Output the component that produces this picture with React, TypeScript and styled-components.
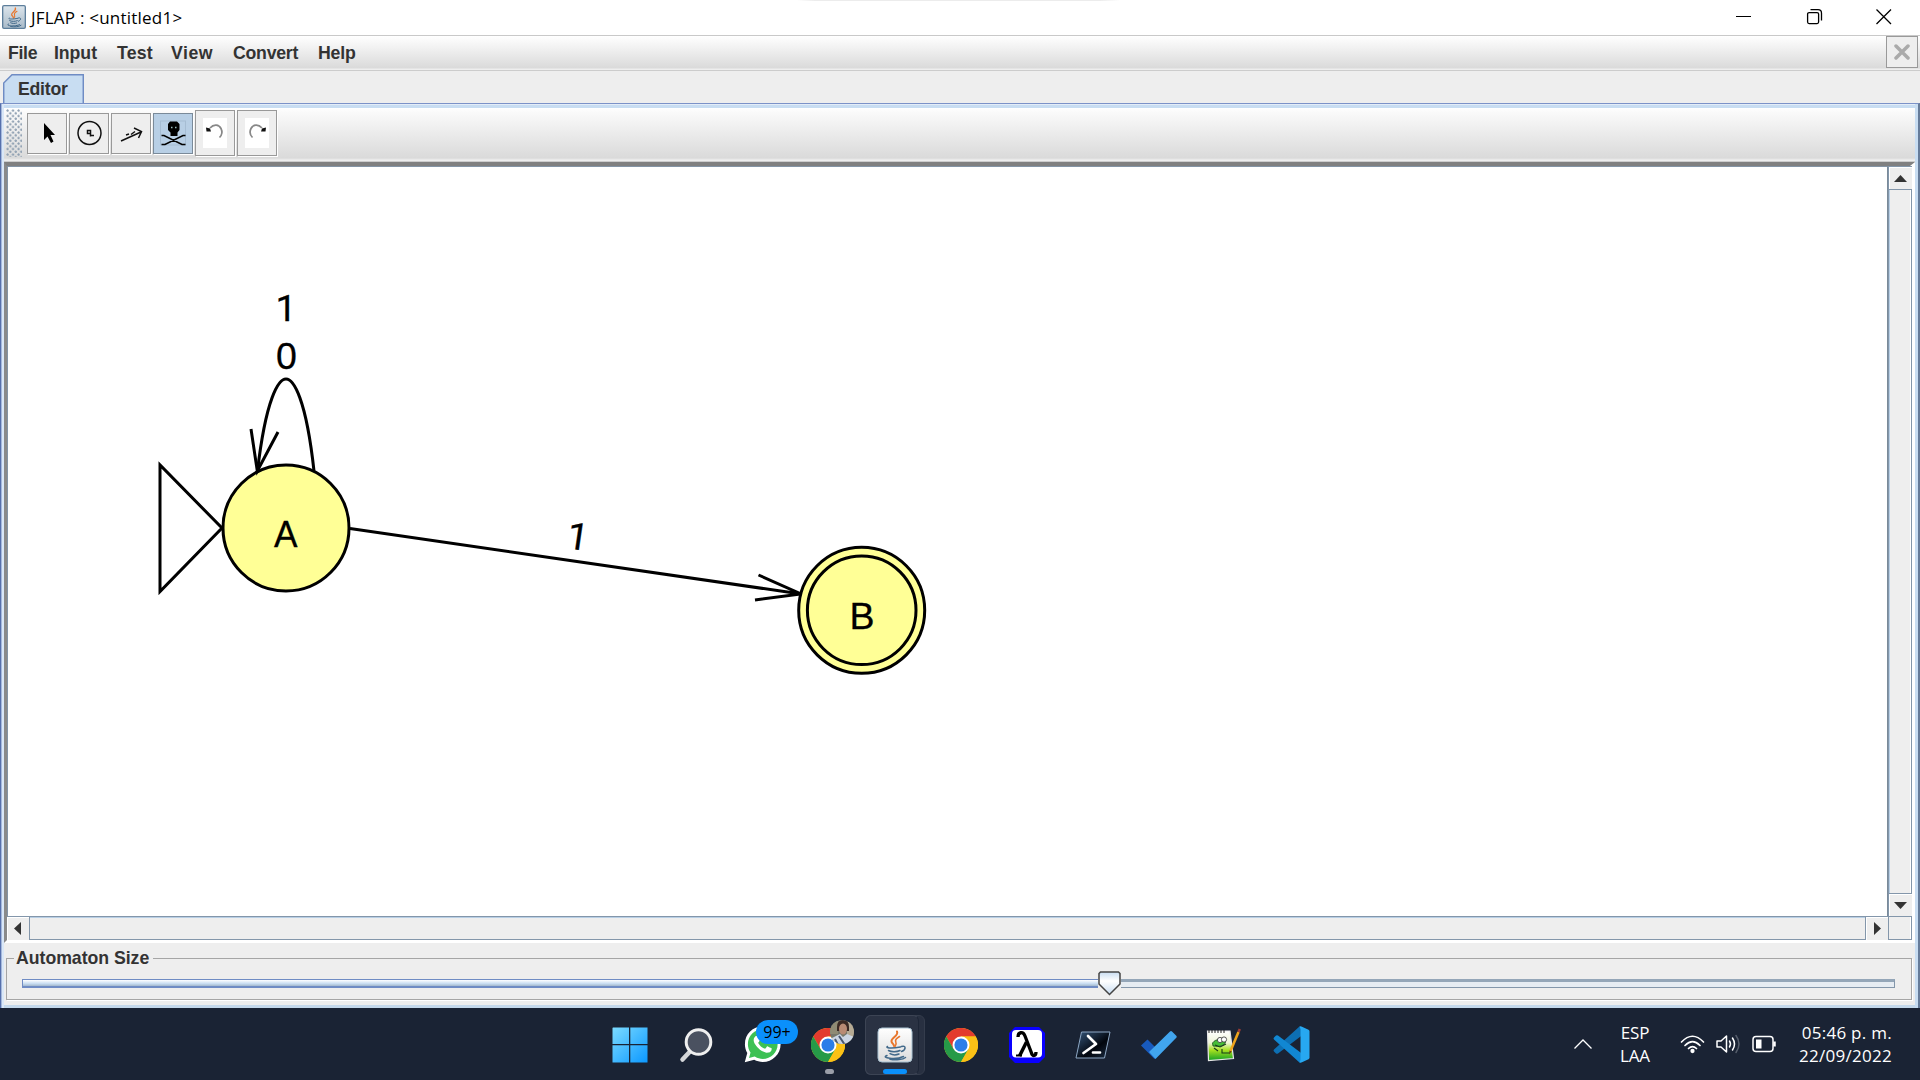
import React from 'react';
import styled, { createGlobalStyle, css } from 'styled-components';
import { FaWhatsapp } from 'react-icons/fa6';

const Global = createGlobalStyle`
  html, body { margin: 0; padding: 0; overflow: hidden; background: #eee; }
  * { box-sizing: border-box; }
  svg { display: block; flex: none; }
`;

const ui = `'Open Sans', 'Noto Sans', sans-serif`;
const swing = `'Liberation Sans', Arial, sans-serif`;

const Screen = styled.div`
  width: 1920px;
  height: 1080px;
  display: flex;
  flex-direction: column;
  background: #eee;
`;

const TitleBar = styled.header`
  height: 35px;
  flex: none;
  display: flex;
  background: linear-gradient(90deg, transparent 797px, #ececec 815px, #ececec 1100px, transparent 1120px) top / 100% 1px no-repeat, #fff;
`;
const AppIcon = styled.div`
  padding: 5px 0 0 2px;
`;
const Title = styled.h1`
  margin: 6px 0 0 5px;
  flex: 1;
  font: 400 17px/24px ${ui};
  letter-spacing: 0.22px;
  color: #000;
`;
const WindowButtons = styled.div`
  display: flex;
  padding: 8px 28px 0 0;
  gap: 52px;
`;

const MenuBar = styled.nav`
  height: 36px;
  flex: none;
  display: flex;
  align-items: flex-start;
  border-top: 1px solid #c9c9c9;
  border-bottom: 1px solid #ccc;
  padding-left: 8px;
  background: linear-gradient(#fff, #dadada 32px, #eee 33px);
`;
const MenuItem = styled.span<{ $w: number; $ls?: number }>`
  width: ${p => p.$w}px;
  padding-top: 6px;
  font: 700 17.7px/22px ${swing};
  letter-spacing: ${p => p.$ls ?? -0.3}px;
  color: #333;
`;
const DismissButton = styled.button`
  width: 32px;
  height: 32px;
  padding: 0;
  margin: 0 2px 0 auto;
  border: 1.5px solid #999;
  background: #eee;
  display: grid;
  place-items: center;
`;

const TabStrip = styled.div`
  height: 32px;
  flex: none;
  padding: 3px 0 0 3px;
  background: #eee;
`;
const Tab = styled.div`
  width: 81px;
  height: 30px;
  display: grid;
  svg, span { grid-area: 1 / 1; }
`;
const TabLabel = styled.span`
  padding: 4px 0 0 15px;
  font: 700 17.7px/22px ${swing};
  letter-spacing: -0.25px;
  color: #333;
`;

const Pane = styled.main`
  height: 905px;
  flex: none;
  display: flex;
  flex-direction: column;
  border-left: 1px solid #5670ac;
  border-right: 2px solid #667b99;
  border-top: 1px solid #7b92c8;
  box-shadow: inset 1px 0 #a5b8dc, inset 3px 0 #d9e7f7, inset -3px 0 #c8ddf2, inset 0 1px #e4edf8, inset 0 4px #c8ddf2, inset 0 -3px #c5d9ec;
  padding: 4px 3px 3px 3px;
`;
const Toolbar = styled.div`
  height: 54px;
  flex: none;
  display: flex;
  align-items: center;
  gap: 2px;
  padding: 0 0 3px 2px;
  border-bottom: 1px solid #ccc;
  background: linear-gradient(#fff, #fafafa 4px, #dadada 50px, #eee 52px);
`;
const Grip = styled.div`
  width: 16px;
  height: 48px;
  margin-right: 3px;
  background:
    radial-gradient(circle at 1.5px 1.5px, #8fa0b2 0.9px, transparent 1.4px) 0 0 / 5.5px 5.5px,
    radial-gradient(circle at 1.5px 1.5px, #8fa0b2 0.9px, transparent 1.4px) 2.75px 2.75px / 5.5px 5.5px;
`;
const ToolButton = styled.button<{ $active?: boolean; $tall?: boolean }>`
  width: 40px;
  height: ${p => (p.$tall ? 46 : 41)}px;
  padding: 0;
  border: 1.5px solid #999;
  box-shadow: 1px 1px #fff;
  background: #eee;
  display: grid;
  place-items: center;
  ${p => p.$active && css`
    background: #b8cfe5;
    border-color: #7a8a99;
  `}
`;

const ScrollPane = styled.section`
  height: 781px;
  flex: none;
  display: grid;
  grid-template: 750px 24px / 1881px 24px;
  border: solid;
  border-width: 4px 5px 3px 3px;
  border-color: #808080 #fff #fff #8a8a8a;
  background: #eee;
`;
const Canvas = styled.div`
  background: #fff;
  border-top: 1px solid #8494a5;
  border-left: 1px solid #8494a5;
  border-right: 1px solid #7a8a99;
`;
const barEdge = '#8396aa';
const VBar = styled.div`
  display: flex;
  flex-direction: column;
  justify-content: space-between;
  border: solid ${barEdge};
  border-width: 1px 1px 0 1px;
  box-shadow: inset 1px 0 #b8cfe5;
`;
const HBar = styled.div`
  display: flex;
  justify-content: space-between;
  border: solid ${barEdge};
  border-width: 1px 0 1px 0;
  box-shadow: inset 0 1px #b8cfe5;
`;
const Arrow = styled.div<{ $edge: 'top' | 'bottom' | 'left' | 'right' }>`
  width: 23px;
  height: 23px;
  display: grid;
  place-items: center;
  background: #eee;
  box-shadow: inset 1px 1px #fff;
  padding-right: ${p => (p.$edge === 'right' ? 2 : 0)}px;
  border-${p => p.$edge}: 1.5px solid ${barEdge};
`;
const Corner = styled.div`
  border: 1px solid ${barEdge};
`;

const SizePanel = styled.section`
  flex: 1;
  padding: 4px 3px 1px 2px;
  background: #eee;
`;
const SizeBox = styled.fieldset`
  height: 53px;
  margin: 0;
  padding: 1px 16px 0 15px;
  border: 1px solid #a5a5a5;
  box-shadow: 1px 1px #fff;
  min-width: 0;
`;
const SizeLegend = styled.legend`
  margin-left: -8px;
  padding: 0 4px 0 2px;
  font: 700 17.7px/22px ${swing};
  letter-spacing: -0.03px;
  color: #333;
`;
const Slider = styled.div`
  height: 26px;
  display: flex;
  align-items: center;
  justify-content: flex-start;
`;
const TrackFilled = styled.div`
  width: 1076px;
  height: 9px;
  border: 1px solid #6f8cc4;
  border-right: 0;
  border-bottom-width: 2px;
  background: linear-gradient(#fff, #c8ddf2 60%, #a3b8cc);
`;
const TrackEmpty = styled.div`
  flex: 1;
  height: 9px;
  border: 1.5px solid #8396aa;
  border-top: 3px solid #94a6b8;
  border-left: 0;
  background: #e6ecf2;
`;

const Taskbar = styled.footer`
  height: 72px;
  flex: none;
  display: flex;
  background: #1a2334;
  color: #fff;
`;
const Apps = styled.div`
  display: flex;
  padding-left: 597px;
`;
const AppCell = styled.div<{ $nudge?: number }>`
  position: relative;
  width: 66px;
  height: 72px;
  display: grid;
  place-items: center;
  padding: 1px 0 0 ${p => p.$nudge ?? 0}px;
`;
const Badge = styled.span`
  position: absolute;
  left: 27px;
  top: 12px;
  width: 42px;
  height: 24px;
  border-radius: 12px;
  background: #0a90fb;
  color: #000;
  font: 400 16px/24px ${ui};
  text-align: center;
`;
const Avatar = styled.div`
  position: absolute;
  left: 34px;
  top: 11px;
`;
const Dot = styled.i`
  position: absolute;
  left: 30px;
  bottom: 6px;
  width: 9px;
  height: 5px;
  border-radius: 3px;
  background: #9a9ea8;
`;
const ActiveFrame = styled.div`
  position: relative;
  width: 60px;
  height: 60px;
  border-radius: 6px;
  background: #283041;
  border: 1px solid #343c4c;
`;
const FrontFrame = styled.div`
  position: absolute;
  left: -1px;
  top: -1px;
  width: 54px;
  height: 60px;
  border-radius: 6px;
  background: #2a3243;
  border: 1px solid #3c4454;
  border-right-color: #1d2637;
  display: grid;
  place-items: center;
  padding-left: 6px;
`;
const Underline = styled.i`
  position: absolute;
  left: 22px;
  bottom: 6px;
  width: 24px;
  height: 5px;
  border-radius: 3px;
  background: #0a90fb;
`;
const Tray = styled.div`
  margin-left: auto;
  display: flex;
  align-items: center;
  padding-right: 28px;
`;
const TrayIcons = styled.div`
  display: flex;
  gap: 11px;
  margin: 0 0 0 25px;
`;
const TrayText = styled.div<{ $align: string; $w: number; $ls?: number }>`
  width: ${p => p.$w}px;
  text-align: ${p => p.$align};
  font: 400 17px/23px ${ui};
  letter-spacing: ${p => p.$ls ?? 0}px;
  white-space: nowrap;
  padding-bottom: 1px;
`;
const Language = styled(TrayText)`
  margin-left: 22px;
`;

const JavaIcon = ({ size, dark }: { size: number; dark?: boolean }) => (
  <svg width={size} height={size} viewBox="0 0 36 36">
    <defs>
      <linearGradient id={dark ? 'jt' : 'jw'} x1="0" y1="0" x2="0" y2="1">
        <stop offset="0" stopColor={dark ? '#dce5ec' : '#ffffff'} />
        <stop offset="1" stopColor={dark ? '#a9bac8' : '#dcdcdc'} />
      </linearGradient>
    </defs>
    <rect x="1" y="1" width="34" height="34" rx={dark ? 2 : 4} fill={`url(#${dark ? 'jt' : 'jw'})`} stroke={dark ? '#5e7f9c' : '#a9c2d2'} strokeWidth={dark ? 2 : 1} />
    <g fill="none" strokeLinecap="round">
      <path d="M20 4.5C22 9 14 10.5 14.5 14.500C14.800 16.500 17 17 17 19" stroke="#e8762c" strokeWidth="2" />
      <path d="M22.500 9.500C19 11.500 17.800 13 18.800 15C19.800 17 19.200 18 18 19.500" stroke="#e8762c" strokeWidth="1.600" />
      <path d="M10.500 19.500C8 21 14 21.800 23.500 20M11.500 23.500C14 25 20 25 23 23.500M13 26.700C15.500 28 19.500 28 22 27M24.500 19.500C29 18 29.500 22.500 24.500 24.500M10 28.500C3 31 19 33 26.500 29.500M13 32.300C19 33.400 26 32.500 28.500 30.500" stroke="#42698a" strokeWidth="1.500" />
    </g>
  </svg>
);

const Chrome = () => (
  <svg width="34" height="34" viewBox="0 0 48 48">
    <circle cx="24" cy="24" r="24" fill="#fbc116" />
    <path d="M24 12H44.800A24 24 0 0 0 3.200 12L13.600 30Z" fill="#e33b2e" />
    <path d="M3.200 12A24 24 0 0 0 24 48L34.400 30L24 24L13.600 30Z" fill="#269a48" />
    <path d="M24 12H44.800A24 24 0 0 1 24 48L34.400 30Z" fill="#fbc116" />
    <circle cx="24" cy="24" r="12" fill="#fff" />
    <circle cx="24" cy="24" r="9.300" fill="#2b7de9" />
  </svg>
);

const WindowsLogo = () => (
  <svg width="36" height="36" viewBox="0 0 36 36">
    <defs>
      <linearGradient id="win" gradientUnits="userSpaceOnUse" x1="0" y1="0" x2="36" y2="36">
        <stop offset="0" stopColor="#7ddcff" />
        <stop offset="1" stopColor="#0a97ff" />
      </linearGradient>
    </defs>
    <path d="M1 .5H17V17H.500V1ZM18.300 .5H35.500V17H18.300ZM.500 18.300H17V35.500H.500ZM18.300 18.300H35.500V35.500H18.300Z" fill="url(#win)" />
  </svg>
);

const SearchIcon = () => (
  <svg width="34" height="36" viewBox="0 0 34 36">
    <path d="M3.500 32.500L11.500 24" stroke="#d4d6d9" strokeWidth="4.500" strokeLinecap="round" />
    <circle cx="19.500" cy="15" r="12.300" fill="#4a5160" stroke="#efefef" strokeWidth="3" />
  </svg>
);

const WhatsApp = () => (
  <svg width="37" height="37" viewBox="0 0 37 37">
    <circle cx="18.800" cy="18" r="15.500" fill="#3dc154" />
    <path d="M3 34L6 24L13 31Z" fill="#3dc154" />
    <FaWhatsapp x="-1.800" y="-2.200" size={41} color="#fff" />
  </svg>
);

const LambdaIcon = () => (
  <svg width="36" height="36" viewBox="0 0 36 36">
    <path d="M6 0H30L36 6V30L30 36H6L0 30V6Z" fill="#0a00ff" />
    <rect x="3" y="3" width="30" height="27.500" rx="4" fill="#fff" />
    <path d="M9 10C9 5 14 4 16 9L22.500 26C23.500 30 27 29 27 25" fill="none" stroke="#000" strokeWidth="3.300" />
    <path d="M17.500 15L10.500 29" stroke="#000" strokeWidth="3.500" />
    <path d="M7 28.500H13" stroke="#000" strokeWidth="2" />
  </svg>
);

const PowerShell = () => (
  <svg width="36" height="28" viewBox="0 0 36 28">
    <defs>
      <linearGradient id="ps" x1="0" y1="0" x2="1" y2="1">
        <stop offset="0" stopColor="#37587d" /><stop offset=".6" stopColor="#02060e" /><stop offset="1" stopColor="#1c2d43" />
      </linearGradient>
    </defs>
    <path d="M6.500 1H35L29.500 27H1Z" fill="url(#ps)" stroke="#8ea8c5" strokeWidth="1" strokeLinejoin="round" />
    <path d="M13 5L21 13L8.500 22M18 21.500H25" fill="none" stroke="#fff" strokeWidth="2.700" strokeLinecap="round" strokeLinejoin="round" />
  </svg>
);

const TodoIcon = () => (
  <svg width="38" height="30" viewBox="0 0 38 30">
    <path d="M1 15.500L7.500 9.500L20 22L14.500 29Z" fill="#185abd" />
    <path d="M9 22L30 1.500Q31 .5 32 1.500L36.500 6Q37 7 36.500 7.500L15.500 29Z" fill="#41a5ee" />
  </svg>
);

const NotepadIcon = () => (
  <svg width="36" height="36" viewBox="0 0 36 36">
    <defs>
      <linearGradient id="np" x1="0" y1="0" x2="0" y2="1">
        <stop offset="0" stopColor="#fff" /><stop offset=".4" stopColor="#f0f5d8" /><stop offset=".65" stopColor="#a6e020" /><stop offset="1" stopColor="#12a024" />
      </linearGradient>
    </defs>
    <path d="M1.500 4L24 4L27.500 31.500L2.500 33.500Z" fill="url(#np)" stroke="#e8e8e8" strokeWidth="1.200" />
    <path d="M3 3V6M6 3V6M9 3V6M12 3V6M15 3V6M18 3V6" stroke="#222" strokeWidth="1" />
    <path d="M6.500 16C10 11 17 12 19.500 15C18 19 14 20 7 19Z" fill="#46bd37" stroke="#174b1b" strokeWidth=".8" />
    <circle cx="14" cy="13" r="2.600" fill="#fff" stroke="#333" strokeWidth=".8" /><circle cx="18" cy="12.500" r="2.600" fill="#fff" stroke="#333" strokeWidth=".8" />
    <path d="M9 18L14 20L20 17M8 21L12 24M16 22V26H24" fill="none" stroke="#153c18" strokeWidth="1.100" />
    <path d="M24.500 24L32.500 5" stroke="#efa41c" strokeWidth="2.600" /><path d="M32.500 5L33.800 2" stroke="#9a3c35" strokeWidth="2.600" />
    <path d="M23.200 27.500L23.500 23.500L25.800 24.500Z" fill="#6b3d13" />
  </svg>
);

const VSCode = () => (
  <svg width="37" height="37" viewBox="0 0 37 37">
    <path d="M26.500 .5L36.500 5L27.500 10.500L5 27.500Q4 28 3 27.500L1 25.500Q0 24.500 1 23.500Z" fill="#0d6fb3" />
    <path d="M26.500 36.500L36.500 31.500L27.500 26.500L5 9.500Q4 9 3 9.500L1 11.500Q0 12.500 1 13.500Z" fill="#1187d2" />
    <path d="M26.500 .5Q28 0 29 .8L35.500 3.800Q36.500 4.300 36.500 5.500V31.500Q36.500 32.700 35.500 33.200L29 36.200Q28 37 26.500 36.500L27.500 34V3Z" fill="#27a8f1" />
  </svg>
);

const Automaton = () => (
  <svg width="1879" height="749" viewBox="8 167 1879 749" fill="none" stroke="#000" strokeWidth="3">
    <path d="M160 465V591.500L222 528Z" />
    <circle cx="286" cy="528" r="63" fill="#ffff96" />
    <path d="M314 471C306 398 293.500 379 286 379S266 398 257.500 471" />
    <path d="M251 429L257.300 471L278 432" />
    <path d="M350 528.500L801 594M758.500 575L801 594L755 600" />
    <circle cx="861.700" cy="610.300" r="63" fill="#ffff96" />
    <circle cx="861.700" cy="610.300" r="54.300" />
    <g fill="#000" strokeWidth=".3" fontSize="37.500" fontFamily="'Liberation Sans', Arial, sans-serif" textAnchor="middle">
      <text x="286" y="321.300" fontFamily="Roboto, sans-serif">1</text>
      <text x="286.500" y="368.700">0</text>
      <text x="285.700" y="546.700" textLength="23.500" lengthAdjust="spacingAndGlyphs">A</text>
      <text x="862" y="628.700">B</text>
      <text transform="translate(576 549.500) rotate(8.300)" fontFamily="Roboto, sans-serif">1</text>
    </g>
  </svg>
);

const arrows = {
  up: 'M0 7L6.500 0L13 7Z',
  down: 'M0 0H13L6.500 7Z',
  left: 'M7 0V13L0 6.500Z',
  right: 'M0 0L7 6.500L0 13Z',
};
const ArrowGlyph = ({ dir }: { dir: keyof typeof arrows }) => {
  const flat = dir === 'up' || dir === 'down';
  return <svg width={flat ? 13 : 7} height={flat ? 7 : 13}><path d={arrows[dir]} fill="#333" /></svg>;
};

const UndoGlyph = ({ flip }: { flip?: boolean }) => (
  <svg width="24" height="30" viewBox="0 0 24 30">
    <rect width="24" height="30" fill="#fff" />
    <g transform={flip ? 'translate(24 0) scale(-1 1)' : undefined}>
      <path d="M7 10C11 5.500 16 6.500 18 10.500C19.500 13.500 19 17 16.500 19.500" fill="none" stroke="#888" strokeWidth="1.700" />
      <path d="M3 9.500L7 10.500L8 13.500H3.500Z" fill="#111" />
    </g>
  </svg>
);

const menus = [
  { label: 'File', w: 46 },
  { label: 'Input', w: 63, ls: -0.05 },
  { label: 'Test', w: 54, ls: 0.2 },
  { label: 'View', w: 62, ls: 0.5 },
  { label: 'Convert', w: 85, ls: -0.25 },
  { label: 'Help', w: 50, ls: -0.2 },
];

export default function App() {
  return (
    <Screen>
      <Global />
      <TitleBar>
        <AppIcon><JavaIcon size={24} dark /></AppIcon>
        <Title>JFLAP : &lt;untitled1&gt;</Title>
        <WindowButtons>
          <svg width="19" height="17"><path d="M2 8.500H17" stroke="#000" /></svg>
          <svg width="18" height="17" fill="none" stroke="#000" strokeWidth="1.300"><rect x="2.600" y="4.600" width="11" height="11" rx="1.500" /><path d="M5.500 1.700H13Q16.500 1.700 16.500 5.200V12.500" /></svg>
          <svg width="17" height="17"><path d="M1.500 1.500L16 16M16 1.500L1.500 16" stroke="#000" strokeWidth="1.300" /></svg>
        </WindowButtons>
      </TitleBar>
      <MenuBar>
        {menus.map(m => <MenuItem key={m.label} $w={m.w} $ls={m.ls}>{m.label}</MenuItem>)}
        <DismissButton><svg width="16" height="16"><path d="M2 2L14 14M14 2L2 14" stroke="#aaa" strokeWidth="3.500" strokeLinecap="round" /></svg></DismissButton>
      </MenuBar>
      <TabStrip>
        <Tab>
          <svg width="81" height="32"><path d="M.700 32V9L9 .8H80.300V29H3V32Z" fill="#c8ddf2" /><path d="M.700 29V9L9 .8H80.300V29" fill="none" stroke="#6f8cc4" strokeWidth="1.500" /></svg>
          <TabLabel>Editor</TabLabel>
        </Tab>
      </TabStrip>
      <Pane>
        <Toolbar>
          <Grip />
          <ToolButton>
            <svg width="24" height="24"><path d="M9 2V19L12.500 15.500L16 22L18.500 20.500L15.500 14H20Z" fill="#000" /></svg>
          </ToolButton>
          <ToolButton>
            <svg width="26" height="26" fill="none" stroke="#111" strokeWidth="1.500"><circle cx="13.500" cy="13" r="11.500" /><path d="M14.500 16.500V10.500H11.500V13.500H14.500M14.500 15.500H18" /></svg>
          </ToolButton>
          <ToolButton>
            <svg width="24" height="24" fill="none" stroke="#111" strokeWidth="1.500"><path d="M2 20L22 11M15 7L22.500 10.500L19.500 17M7 14L10 13M12 13.500L16 10.500" /></svg>
          </ToolButton>
          <ToolButton $active>
            <svg width="28" height="28" viewBox="0 0 28 28"><rect x="1.500" y="2" width="25" height="24" fill="none" stroke="#a6bdd3" /><path d="M11 2.500H18L20.500 5V11L18.500 13.500V17H11.500V13.500L9 11V5Z" fill="#000" /><path d="M12 8.500H13.500M16 8.500H17.500" stroke="#9bb" strokeWidth="1.500" /><path d="M2.500 16.500H5L23 25.500H26.500M26.500 16.500H24L6 25.500H2.500" fill="none" stroke="#000" strokeWidth="1.600" /></svg>
          </ToolButton>
          <ToolButton $tall><UndoGlyph /></ToolButton>
          <ToolButton $tall><UndoGlyph flip /></ToolButton>
        </Toolbar>
        <ScrollPane>
          <Canvas><Automaton /></Canvas>
          <VBar>
            <Arrow $edge="bottom"><ArrowGlyph dir="up" /></Arrow>
            <Arrow $edge="top"><ArrowGlyph dir="down" /></Arrow>
          </VBar>
          <HBar>
            <Arrow $edge="right"><ArrowGlyph dir="left" /></Arrow>
            <Arrow $edge="left"><ArrowGlyph dir="right" /></Arrow>
          </HBar>
          <Corner />
        </ScrollPane>
        <SizePanel>
          <SizeBox>
            <SizeLegend>Automaton Size</SizeLegend>
            <Slider>
              <TrackFilled />
              <svg width="23" height="25" viewBox="0 0 23 25">
                <defs><linearGradient id="th" x1="0" y1="0" x2="0" y2="1"><stop offset="0" stopColor="#c8ddf2" /><stop offset=".4" stopColor="#fff" /><stop offset="1" stopColor="#c8ddf2" /></linearGradient></defs>
                <path d="M2.500 1H20.500L22 2.500V13L11.500 23.500L1 13V2.500Z" fill="url(#th)" stroke="#444" strokeWidth="1.500" />
              </svg>
              <TrackEmpty />
            </Slider>
          </SizeBox>
        </SizePanel>
      </Pane>
      <Taskbar>
        <Apps>
          <AppCell><WindowsLogo /></AppCell>
          <AppCell><SearchIcon /></AppCell>
          <AppCell><WhatsApp /><Badge>99+</Badge></AppCell>
          <AppCell>
            <Chrome />
            <Avatar>
              <svg width="26" height="26" viewBox="0 0 26 26">
                <clipPath id="av"><circle cx="13" cy="13" r="12" /></clipPath>
                <g clipPath="url(#av)">
                  <rect width="26" height="26" fill="#76786b" />
                  <path d="M0 0H9V15H0Z" fill="#8f8b74" /><path d="M18 3H26V18H18Z" fill="#b5aa94" />
                  <path d="M8 8Q8 1 14 1Q20 1 20 8V12H8Z" fill="#3b2a24" />
                  <ellipse cx="14" cy="10" rx="4" ry="5.500" fill="#b98b73" />
                  <path d="M2 26L3 19L11 15L14 18L18 15L25 18V26Z" fill="#ccd6e3" /><path d="M10 17L16 26M6 20L9 26" stroke="#4a5870" strokeWidth="2" />
                </g>
              </svg>
            </Avatar>
            <Dot />
          </AppCell>
          <AppCell $nudge={2}><ActiveFrame><FrontFrame><JavaIcon size={36} /></FrontFrame></ActiveFrame><Underline /></AppCell>
          <AppCell $nudge={2}><Chrome /></AppCell>
          <AppCell $nudge={2}><LambdaIcon /></AppCell>
          <AppCell $nudge={2}><PowerShell /></AppCell>
          <AppCell $nudge={2}><TodoIcon /></AppCell>
          <AppCell $nudge={0}><NotepadIcon /></AppCell>
          <AppCell $nudge={2}><VSCode /></AppCell>
        </Apps>
        <Tray>
          <svg width="20" height="12"><path d="M1.500 10.500L10 2L18.500 10.500" fill="none" stroke="#fff" strokeWidth="1.300" /></svg>
          <Language $align="center" $w={40} $ls={-0.2}>ESP<br />LAA</Language>
          <TrayIcons>
            <svg width="25" height="20" fill="none" stroke="#fff" strokeWidth="1.700" strokeLinecap="round"><path d="M1.500 8Q12.500-3.500 23.500 8M5 11.500Q12.500 4 20 11.500M8.500 14.500Q12.500 10.500 16.500 14.500" /><circle cx="12.500" cy="17" r="1.300" fill="#fff" /></svg>
            <svg width="25" height="20" fill="none" stroke="#fff" strokeWidth="1.500" strokeLinecap="round" strokeLinejoin="round"><path d="M1 7H5L10.500 2V18L5 13H1Z" /><path d="M13.500 7Q15.500 10 13.500 13M16.500 4Q20.500 10 16.500 16" /><path d="M20 1.500Q26 10 20 18.500" stroke="#555d6b" /></svg>
            <svg width="25" height="20" fill="none" stroke="#fff" strokeWidth="1.500"><rect x="1" y="2.500" width="20" height="15" rx="3" /><rect x="4" y="5.500" width="5.500" height="9" fill="#fff" stroke="none" /><path d="M22.500 7.500V12.500" strokeWidth="2.500" /></svg>
          </TrayIcons>
          <TrayText $align="right" $w={115} $ls={0.28}>05:46 p. m.<br />22/09/2022</TrayText>
        </Tray>
      </Taskbar>
    </Screen>
  );
}
